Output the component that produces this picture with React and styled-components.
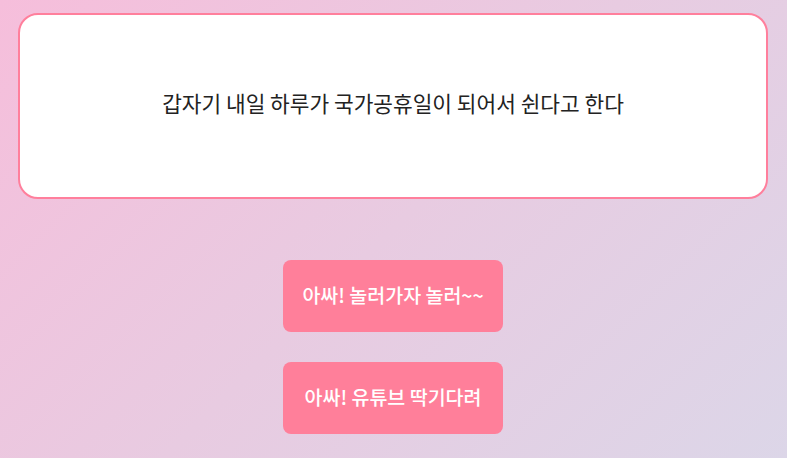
import React from 'react';
import styled, { createGlobalStyle } from 'styled-components';

const GlobalStyle = createGlobalStyle`
  html, body {
    margin: 0;
    padding: 0;
    height: 100%;
  }

  body {
    font-family: "Noto Sans CJK KR", "Noto Sans", sans-serif;
    background: linear-gradient(135deg, #f6bedb 0%, #e8cbe1 50%, #dcd6e8 100%);
    background-attachment: fixed;
  }
`;

const Page = styled.div`
  min-height: 458px;
  box-sizing: border-box;
  padding: 13px 19px 0 18px;
  display: flex;
  flex-direction: column;
  align-items: center;
`;

const Card = styled.div`
  width: 100%;
  height: 186px;
  box-sizing: border-box;
  background: #fff;
  border: 2px solid #ff7f9c;
  border-radius: 20px;
  display: flex;
  justify-content: center;
  align-items: center;
  font-size: 21.4px;
  color: #222;
  padding-bottom: 7px;
`;

const Choices = styled.div`
  margin-top: 61px;
  display: flex;
  flex-direction: column;
  gap: 30px;
`;

const Choice = styled.button`
  width: 220px;
  height: 72px;
  padding: 0 0 4px;
  border: none;
  border-radius: 8px;
  background: #ff7f9a;
  color: #fff;
  font-family: inherit;
  font-size: 19.5px;
  font-weight: 500;
  cursor: pointer;
`;

export default () => {
  return (
    <>
      <GlobalStyle />
      <Page>
        <Card>갑자기 내일 하루가 국가공휴일이 되어서 쉰다고 한다</Card>
        <Choices>
          <Choice>아싸! 놀러가자 놀러~~</Choice>
          <Choice>아싸! 유튜브 딱기다려</Choice>
        </Choices>
      </Page>
    </>
  );
};
